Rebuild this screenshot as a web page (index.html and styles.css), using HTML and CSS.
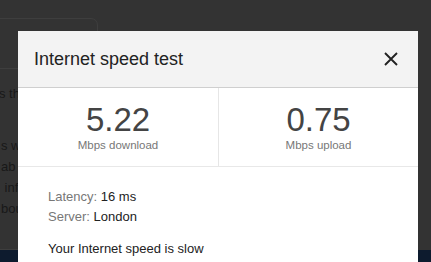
FILE: index.html
```html
<!DOCTYPE html>
<html>
<head>
<meta charset="utf-8">
<link rel="stylesheet" href="styles.css">
</head>
<body>
<div class="page">
  <div class="card">
    <div class="card-head"></div>
    <p class="card-line">s the speed of your connection</p>
    <div class="card-para">
      <p class="card-line">s will vary with your network</p>
      <p class="card-line">ab or window open</p>
      <p class="card-line">&nbsp;info about the test</p>
      <p class="card-line">bout results</p>
    </div>
  </div>
  <div class="footer-bar"></div>
</div>

<div class="modal">
  <div class="modal-head">
    <h1 class="modal-title">Internet speed test</h1>
    <button class="close" aria-label="Close">
      <svg width="14" height="14" viewBox="0 0 14 14"><path d="M1 1L13 13M13 1L1 13" stroke="#222" stroke-width="1.9" fill="none"/></svg>
    </button>
  </div>
  <div class="stats">
    <div class="stat">
      <div class="stat-num">5.22</div>
      <div class="stat-label">Mbps download</div>
    </div>
    <div class="stat">
      <div class="stat-num">0.75</div>
      <div class="stat-label">Mbps upload</div>
    </div>
  </div>
  <div class="details">
    <div class="row"><span class="key">Latency:</span> 16 ms</div>
    <div class="row"><span class="key">Server:</span> London</div>
    <p class="verdict">Your Internet speed is slow</p>
  </div>
</div>
</body>
</html>
```
FILE: styles.css
```css
html, body {
  margin: 0;
  padding: 0;
}
body {
  background: #333333;
  font-family: "Liberation Sans", Arial, sans-serif;
  width: 431px;
  height: 262px;
  overflow: hidden;
}
.page {
  padding-top: 18px;
  display: flex;
  flex-direction: column;
}
.card {
  margin-left: -20px;
  width: 118px;
  height: 232px;
  border: 1px solid #3e3e3e;
  border-radius: 0 7px 0 0;
  box-sizing: border-box;
}
.card-head {
  height: 49px;
  border-bottom: 1px solid #3e3e3e;
}
.card-line {
  margin: 0;
  padding-left: 20px;
  font-size: 13px;
  line-height: 21px;
  color: #181818;
  white-space: nowrap;
  overflow: hidden;
}
.card > .card-line {
  margin-top: 14px;
  margin-left: -2px;
}
.card-para {
  margin-top: 31px;
}
.footer-bar {
  height: 12px;
  background: #0d1b2e;
}
.modal {
  position: absolute;
  left: 18px;
  top: 31px;
  width: 400px;
  height: 260px;
  background: #ffffff;
  color: #222;
}
.modal-head {
  height: 56px;
  background: #f3f3f3;
  border-bottom: 1px solid #cfcfcf;
  display: flex;
  align-items: center;
  justify-content: space-between;
  padding: 0 20px 0 16px;
}
.modal-title {
  margin: 0;
  font-size: 18px;
  line-height: 22px;
  font-weight: normal;
  color: #222;
}
.close {
  border: 0;
  background: none;
  padding: 0;
  width: 14px;
  height: 14px;
  display: flex;
}
.stats {
  display: grid;
  grid-template-columns: 200px 200px;
  border-bottom: 1px solid #e8e8e8;
}
.stat {
  padding: 14px 0;
  text-align: center;
}
.stat + .stat {
  border-left: 1px solid #e6e6e6;
}
.stat-num {
  font-size: 33px;
  line-height: 36px;
  color: #444;
}
.stat-label {
  font-size: 11.5px;
  line-height: 14px;
  color: #777;
}
.details {
  padding: 20px 30px;
  font-size: 13px;
  line-height: 20px;
  color: #222;
}
.key {
  color: #777;
}
.verdict {
  margin: 12px 0 0;
}
```
